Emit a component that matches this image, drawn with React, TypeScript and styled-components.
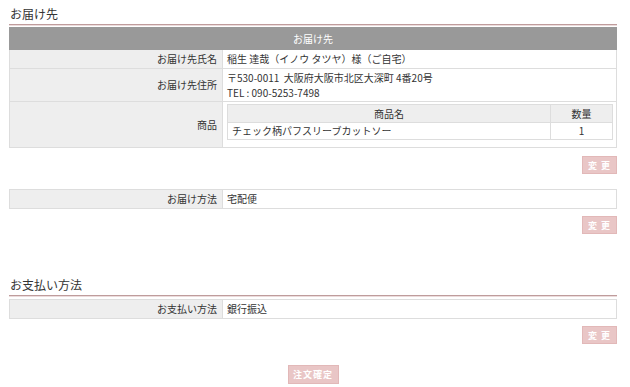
import React from 'react'
import styled, { createGlobalStyle } from 'styled-components'

const GlobalStyle = createGlobalStyle`
  html, body {
    margin: 0;
    padding: 0;
    background: #fff;
  }
  body {
    font-family: "Noto Sans CJK JP", "Noto Sans", sans-serif;
    color: #333;
  }
`

const Page = styled.div`
  width: 608px;
  padding: 0 13px 0 9px;
`

const SectionTitle = styled.h2<{ $top?: number }>`
  margin: ${({ $top }) => $top ?? 0}px 0 0 0;
  padding: 6px 0 2px 1px;
  font-size: 12px;
  font-weight: normal;
  line-height: 16px;
  color: #333;
  border-bottom: 1px solid #bf9c9c;
  box-shadow: 0 1px 0 #ecdcdc;
`

const InfoTable = styled.table<{ $top?: number }>`
  width: 100%;
  margin-top: ${({ $top }) => $top ?? 2}px;
  border-collapse: collapse;
  border: 1px solid #ddd;
  font-size: 10px;
  line-height: 14px;
`

const HeadCell = styled.th`
  background: #999;
  color: #fff;
  font-weight: normal;
  text-align: center;
  height: 21px;
  padding: 0;
  border: 1px solid #999;
`

const Label = styled.th`
  width: 207px;
  background: #eee;
  font-weight: normal;
  text-align: right;
  padding: 2px 5px 2px 0;
  border: 1px solid #ddd;
  vertical-align: middle;
`

const Value = styled.td<{ $top?: number; $bottom?: number }>`
  background: #fff;
  text-align: left;
  padding: ${({ $top }) => $top ?? 2}px 3px ${({ $bottom }) => $bottom ?? 2}px 4px;
  border: 1px solid #ddd;
  vertical-align: middle;
`

const AddressLine = styled.div`
  line-height: 15px;
  white-space: pre;
`

const ItemTable = styled.table`
  width: 100%;
  border-collapse: collapse;
  border: 1px solid #ddd;
`

const ItemHead = styled.th<{ $w?: number }>`
  background: #eee;
  font-weight: normal;
  text-align: center;
  height: 17px;
  padding: 0;
  width: ${({ $w }) => ($w ? `${$w}px` : 'auto')};
  border: 1px solid #ddd;
`

const ItemCell = styled.td<{ $align?: string }>`
  text-align: ${({ $align }) => $align ?? 'left'};
  height: 16px;
  padding: 0 4px;
  border: 1px solid #ddd;
`

const ButtonRow = styled.div<{ $top: number; $center?: boolean }>`
  display: flex;
  justify-content: ${({ $center }) => ($center ? 'center' : 'flex-end')};
  margin-top: ${({ $top }) => $top}px;
`

const PinkButton = styled.button<{ $w: number; $h: number }>`
  width: ${({ $w }) => $w}px;
  height: ${({ $h }) => $h}px;
  padding: 0;
  margin: 0;
  background: #e9c6c6;
  border: 1px solid #e2b8b8;
  color: #fff;
  font-family: "Noto Sans CJK JP", sans-serif;
  font-size: 9px;
  font-weight: bold;
  letter-spacing: 1px;
  line-height: 1;
  cursor: pointer;
`

const App: React.FC = () => {
  return (
    <>
      <GlobalStyle />
      <Page>
        <SectionTitle>お届け先</SectionTitle>
        <InfoTable>
          <tbody>
            <tr>
              <HeadCell colSpan={2}>お届け先</HeadCell>
            </tr>
            <tr>
              <Label>お届け先氏名</Label>
              <Value>稲生 達哉（イノウ タツヤ）様（ご自宅）</Value>
            </tr>
            <tr>
              <Label>お届け先住所</Label>
              <Value $top={1} $bottom={1}>
                <AddressLine>〒530-0011  大阪府大阪市北区大深町 4番20号</AddressLine>
                <AddressLine>TEL : 090-5253-7498</AddressLine>
              </Value>
            </tr>
            <tr>
              <Label>商品</Label>
              <Value $top={2} $bottom={7}>
                <ItemTable>
                  <tbody>
                    <tr>
                      <ItemHead>商品名</ItemHead>
                      <ItemHead $w={61}>数量</ItemHead>
                    </tr>
                    <tr>
                      <ItemCell>チェック柄パフスリーブカットソー</ItemCell>
                      <ItemCell $align="center">1</ItemCell>
                    </tr>
                  </tbody>
                </ItemTable>
              </Value>
            </tr>
          </tbody>
        </InfoTable>
        <ButtonRow $top={8}>
          <PinkButton $w={35} $h={18}>変 更</PinkButton>
        </ButtonRow>

        <InfoTable $top={15}>
          <tbody>
            <tr>
              <Label>お届け方法</Label>
              <Value>宅配便</Value>
            </tr>
          </tbody>
        </InfoTable>
        <ButtonRow $top={7}>
          <PinkButton $w={35} $h={18}>変 更</PinkButton>
        </ButtonRow>

        <SectionTitle $top={37}>お支払い方法</SectionTitle>
        <InfoTable $top={3}>
          <tbody>
            <tr>
              <Label>お支払い方法</Label>
              <Value>銀行振込</Value>
            </tr>
          </tbody>
        </InfoTable>
        <ButtonRow $top={7}>
          <PinkButton $w={35} $h={18}>変 更</PinkButton>
        </ButtonRow>

        <ButtonRow $top={21} $center>
          <PinkButton $w={51} $h={19}>注文確定</PinkButton>
        </ButtonRow>
      </Page>
    </>
  )
}

export default App
